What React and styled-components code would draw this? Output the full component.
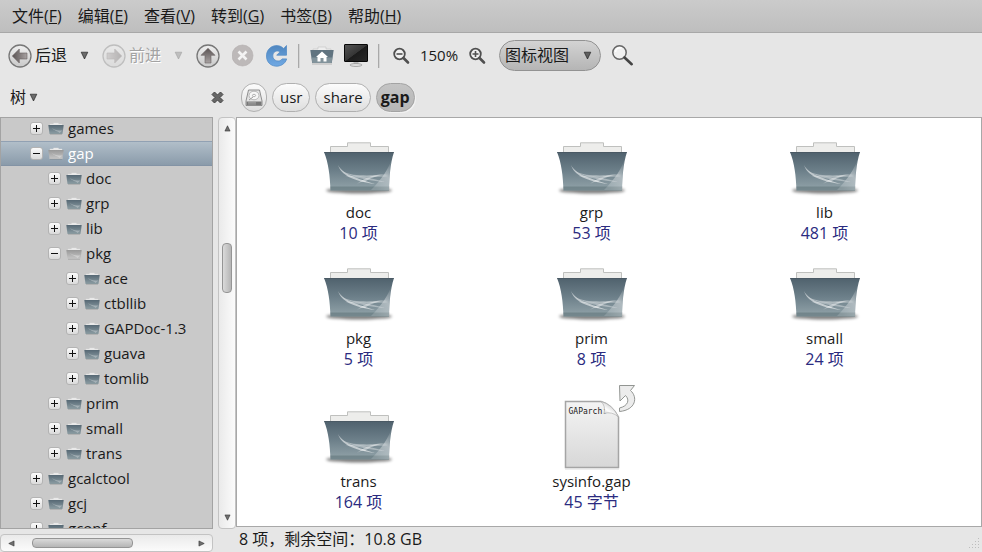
import React from "react";
import styled, { createGlobalStyle, css } from "styled-components";

const fonts = `"Open Sans", "Noto Sans CJK SC", sans-serif`;

const GlobalStyle = createGlobalStyle`
	* {
		box-sizing: border-box;
	}

	body {
		margin: 0;
		background: #e6e6e6;
		color: #1a1a1a;
		font-family: ${fonts};
		font-size: 15px;
		line-height: 21px;
	}

	button, select {
		margin: 0;
		padding: 0;
		border: 0;
		background: none;
		color: inherit;
		font: inherit;
	}

	ul {
		margin: 0;
		padding: 0;
		list-style: none;
	}

	svg {
		display: block;
		flex: none;
	}
`;

const Window = styled.div`
	display: flex;
	flex-direction: column;
	height: 100vh;
	overflow: hidden;
`;

const MenuBar = styled.nav`
	display: flex;
	flex: none;
	align-items: center;
	gap: 16px;
	height: 33px;
	padding: 0 12px;
	border-bottom: 1px solid #a8a8a8;
	background: linear-gradient(#cbcbcb, #bebebe);
	font-size: 16px;
`;

const ToolBar = styled.div`
	display: flex;
	flex: none;
	align-items: center;
	gap: 10px;
	height: 45px;
	padding: 0 8px;
`;

const ToolGroup = styled.div`
	display: flex;
	align-items: center;
	gap: ${({ $gap }) => $gap || 10}px;
`;

const ToolButton = styled.button`
	display: flex;
	align-items: center;
	justify-content: center;
	gap: 3px;
	font-size: 16px;

	&:disabled {
		color: #a3a3a3;
		text-shadow: 1px 1px 0 #fff;
	}
`;

const HistoryButton = styled(ToolButton)`
	width: 11px;
	height: 24px;
`;

const Separator = styled.div`
	width: 2px;
	height: 24px;
	border-left: 1px solid #a9a9a9;
	border-right: 1px solid #d4d4d4;
`;

const ZoomGroup = styled(ToolGroup)`
	padding: 0 3px 0 2px;
`;

const ZoomLevel = styled.output`
	width: 58px;
	text-align: center;
`;

const ViewPicker = styled.label`
	position: relative;

	select {
		display: block;
		width: 102px;
		height: 31px;
		padding: 0 5px;
		appearance: none;
		border: 1px solid #929292;
		border-radius: 16px;
		background: linear-gradient(#d3d3d3, #b5b5b5);
		font-size: 16px;
	}

	svg {
		position: absolute;
		top: 11px;
		right: 9px;
		pointer-events: none;
	}
`;

const Body = styled.main`
	display: grid;
	flex: 1;
	grid-template-columns: 236px minmax(0, 1fr);
	min-height: 0;
`;

const SidePane = styled.aside`
	display: grid;
	grid-template-rows: 39px minmax(0, 1fr) 18px;
	grid-template-columns: 213px 18px;
	column-gap: 5px;
	row-gap: 0;
	min-height: 0;
`;

const SideHeader = styled.div`
	display: flex;
	grid-column: 1 / -1;
	align-items: center;
	justify-content: space-between;
	padding: 0 12px 0 10px;
`;

const SideTitle = styled.button`
	display: flex;
	align-items: center;
	gap: 3px;
	font-size: 16px;
`;

const Tree = styled.ul`
	overflow: hidden;
	margin-bottom: 5px;
	border: 1px solid #a3a3a3;
	background: #c9c9c9;
`;

/* the list is scrolled, so the first row is partly hidden */
const TreeRow = styled.li`
	display: flex;
	align-items: center;
	gap: 4px;
	height: 25px;
	padding-left: ${({ $depth }) => 29 + $depth * 18}px;

	&:first-child {
		margin-top: -2px;
	}

	${({ $selected }) =>
		$selected &&
		css`
			border-top: 1px solid #91a1b3;
			border-bottom: 1px solid #8393a5;
			background: linear-gradient(#b1bec9, #8a9baa);
			color: #fff;
		`}
`;

const Expander = styled.button`
	display: grid;
	place-items: center;
	width: 13px;
	height: 13px;
	margin-right: 1px;
	border: 1px solid #b3b3b3;
	border-radius: 3px;
	background: linear-gradient(#fbfbfb, #dadada);
`;

const ScrollBar = styled.div`
	display: flex;
	flex-direction: ${({ $vertical }) => ($vertical ? "column" : "row")};
	align-items: center;
	justify-content: space-between;
	padding: ${({ $vertical }) => ($vertical ? "7px 0" : "0 7px")};
	border: 1px solid #c3c3c3;
	border-radius: 4px;
	background: ${({ $vertical }) =>
		$vertical
			? "linear-gradient(90deg, #eaeaea, #fbfbfb)"
			: "linear-gradient(#eaeaea, #fbfbfb)"};
	${({ $vertical }) => $vertical && "margin-bottom: 5px;"}
`;

const Track = styled.div`
	display: flex;
	flex: 1;
	flex-direction: ${({ $vertical }) => ($vertical ? "column" : "row")};
	align-items: center;

	&::before {
		content: "";
		flex: ${({ $start }) => $start} 0 0;
	}

	&::after {
		content: "";
		flex: ${({ $end }) => $end} 0 0;
	}
`;

const Thumb = styled.div`
	width: ${({ $vertical }) => ($vertical ? 10 : 101)}px;
	height: ${({ $vertical }) => ($vertical ? 50 : 10)}px;
	border: 1px solid #959595;
	border-radius: 4px;
	background: ${({ $vertical }) =>
		$vertical
			? "linear-gradient(90deg, #dadada, #b5b5b5)"
			: "linear-gradient(#dadada, #b5b5b5)"};
`;

const MainPane = styled.section`
	display: flex;
	flex-direction: column;
	min-height: 0;
`;

const PathBar = styled.nav`
	display: flex;
	flex: none;
	align-items: center;
	gap: 5px;
	height: 39px;
	padding: 0 5px;
`;

const PathButton = styled.button`
	display: flex;
	align-items: center;
	justify-content: center;
	height: 29px;
	padding: 0 ${({ $icon }) => ($icon ? 3 : 7)}px;
	border: 1px solid #b0b0b0;
	border-radius: 15px;
	background: linear-gradient(#fcfcfc, #dedede);

	${({ $current }) =>
		$current &&
		css`
			padding: 0 4px;
			border-color: #a3a3a3;
			background: linear-gradient(#c4c4c4, #b6b6b6);
			box-shadow: 1px 1px 0 #f2f2f2;
			font-size: 16px;
			font-weight: bold;
		`}
`;

const IconView = styled.ul`
	display: grid;
	flex: 1;
	grid-template-columns: repeat(auto-fill, 233px);
	align-content: start;
	align-items: end;
	row-gap: 24px;
	min-height: 0;
	overflow: hidden;
	padding: 24px 5px 0;
	border: 1px solid #a8a8a8;
	background: #fff;
`;

const Entry = styled.li`
	display: flex;
	flex-direction: column;
	align-items: center;
	gap: 1px;
`;

const EntryName = styled.div`
	text-align: center;

	small {
		display: block;
		color: #2b2b80;
		font-size: 16px;
	}
`;

const FilePreview = styled.div`
	position: relative;
	padding-top: 6px;
`;

const PreviewText = styled.span`
	position: absolute;
	top: 12px;
	left: 5px;
	font: 8px/12px "DejaVu Sans Mono", monospace;
`;

const PaperFold = styled.svg`
	position: absolute;
	top: 6px;
	right: 0;
`;

const Emblem = styled.svg`
	position: absolute;
	top: -10px;
	right: -18px;
`;

const StatusBar = styled.footer`
	display: flex;
	flex: none;
	align-items: center;
	justify-content: space-between;
	height: 25px;
	padding-left: 3px;
	font-size: 16px;
`;

const Triangle = ({ dir = "down", size = 9 }) => {
	const turn = { down: 0, left: 90, up: 180, right: 270 }[dir];
	return (
		<svg width={size} height={size} viewBox="0 0 9 9">
			<path
				d="M1.200 1.200h6.600L4.500 8z"
				transform={`rotate(${turn} 4.5 4.5)`}
				fill="currentColor"
				fillOpacity=".6"
				stroke="currentColor"
				strokeOpacity=".8"
				strokeWidth=".8"
			/>
		</svg>
	);
};

const CircleArrow = ({ turn = 0, faded }) => (
	<svg width="24" height="24" viewBox="0 0 24 24" opacity={faded ? 0.35 : 1}>
		<defs>
			<linearGradient id="circle" x2="0" y2="1">
				<stop stopColor="#f0f0f0" />
				<stop offset="1" stopColor="#c9c9c9" />
			</linearGradient>
			<linearGradient id="arrow" x2="1" y2="0">
				<stop stopColor="#5a5353" />
				<stop offset="1" stopColor="#a8a2a2" />
			</linearGradient>
		</defs>
		<circle cx="12" cy="12" r="11" fill="url(#circle)" stroke="#777" strokeWidth="1.300" />
		<path
			d="M4.300 12l7-7v4H19v6h-7.700v4z"
			transform={`rotate(${turn} 12 12)`}
			fill="url(#arrow)"
			stroke="#696262"
			strokeWidth=".6"
		/>
	</svg>
);

const StopIcon = () => (
	<svg width="22" height="24" viewBox="0 0 22 24">
		<circle cx="10.500" cy="11.500" r="10.500" fill="#bdb9b9" stroke="#b1adad" strokeWidth=".6" />
		<path d="M6.500 7.500l8 8m0-8l-8 8" stroke="#f3f3f3" strokeWidth="2.600" />
	</svg>
);

const ReloadIcon = () => (
	<svg width="22" height="24" viewBox="0 0 22 24">
		<defs>
			<linearGradient id="reload" x2="0" y2="1">
				<stop stopColor="#4f86bf" />
				<stop offset="1" stopColor="#70a9e4" />
			</linearGradient>
		</defs>
		<path
			d="M20.500 1.500v9.700h-9.800l3.500-3.500C9.700 5.500 6.800 8.500 6.800 12c0 5 7 6.800 9.300 2.900h4.600C17.500 25.500.5 24.500.5 12 .5 2 12-1.500 17.700 4.600z"
			fill="url(#reload)"
			stroke="#568dc6"
			strokeWidth=".8"
		/>
	</svg>
);

const HomeIcon = () => (
	<svg width="24" height="24" viewBox="0 0 24 24">
		<path d="M3 7V5h5V3h8v2h5v2z" fill="#eee" stroke="#c5c5c5" strokeWidth=".6" />
		<path d="M.3 6h23.400L21.800 19H2.200z" fill="#617480" />
		<path d="M1.700 13.500h20.600L21.700 19H2.300z" fill="#82939b" />
		<path d="M12 7.500l6 5.500h-1.500v4.500h-3V14h-3v3.500h-3V13H6z" fill="#fff" />
		<path d="M2 20h20" stroke="#b5b5b5" />
	</svg>
);

const ComputerIcon = () => (
	<svg width="24" height="24" viewBox="0 0 24 24">
		<defs>
			<linearGradient id="screen" x2="1" y2="1">
				<stop stopColor="#555" />
				<stop offset=".5" stopColor="#363636" />
				<stop offset=".52" stopColor="#1c1c1c" />
				<stop offset="1" stopColor="#292929" />
			</linearGradient>
		</defs>
		<rect x=".5" y=".5" width="23" height="17" rx=".5" fill="url(#screen)" stroke="#080808" />
		<path d="M9.500 18h5v3h-5z" fill="#bbb" />
		<ellipse cx="12" cy="21" rx="6" ry="1.500" fill="#ddd" stroke="#929292" strokeWidth=".7" />
	</svg>
);

const ZoomIcon = ({ plus }) => (
	<svg width="18" height="18" viewBox="0 0 18 18" fill="none" stroke="#505050">
		<circle cx="7.500" cy="7" r="5.300" fill="#f1f1f1" strokeWidth="1.800" />
		<path d="M11.500 11l4.500 4.500" strokeWidth="2.600" strokeLinecap="round" />
		<path d={plus ? "M4.500 7h6M7.500 4v6" : "M4.500 7h6"} strokeWidth="1.600" />
	</svg>
);

const SearchIcon = () => (
	<svg width="24" height="24" viewBox="0 0 24 24">
		<circle cx="8.500" cy="8.500" r="6.700" fill="#f0f0f0" stroke="#666" strokeWidth="1.500" />
		<path d="M4.500 8a4.500 4.500 0 0 1 6-4" fill="none" stroke="#fff" strokeWidth="1.500" />
		<path d="M13.500 13.500l7.200 6.700" stroke="#444" strokeWidth="2.600" strokeLinecap="round" />
	</svg>
);

const CloseIcon = () => (
	<svg width="13" height="13" viewBox="0 0 13 13">
		<path
			d="M1 3.500L3.500 1l3 3 3-3L12 3.500l-3 3 3 3L9.500 12l-3-3-3 3L1 9.500l3-3z"
			fill="#666"
			stroke="#444"
		/>
	</svg>
);

const DiskIcon = () => (
	<svg width="18" height="18" viewBox="0 0 18 18">
		<path d="M3.500 1h11l2.500 11v4.500H1V12z" fill="#e3e3e3" stroke="#777" strokeWidth=".8" />
		<path d="M1.500 12.500h15V16h-15z" fill="#777" />
		<path d="M3 13.700h8M3 15h8" stroke="#bbb" strokeWidth=".6" />
		<ellipse cx="9" cy="6.500" rx="5" ry="4.300" fill="#f6f6f6" stroke="#aaa" strokeWidth=".8" />
		<ellipse cx="9" cy="6.500" rx="1.600" ry="1.200" fill="none" stroke="#999" strokeWidth=".7" />
		<path d="M4 11l4-3" stroke="#999" />
	</svg>
);

const SmallFolder = ({ open }) => (
	<svg width="16" height="16" viewBox="0 0 16 16">
		<defs>
			<linearGradient id={open ? "small-open" : "small-closed"} x2="0" y2="1">
				<stop stopColor={open ? "#989898" : "#566874"} />
				<stop offset="1" stopColor={open ? "#c7c7c7" : "#8d9ea4"} />
			</linearGradient>
		</defs>
		<path d="M2 4V3h3.500V2h5v1H14v1z" fill="#ececec" stroke="#ddd" strokeWidth=".4" />
		<path d="M.3 4h15.400l-1.200 9H1.500z" fill={`url(#${open ? "small-open" : "small-closed"})`} />
		<path d="M4 7c3 2.500 7 2.500 10.500 2.500l-3 2.500C10 10 6 10 4 7z" fill="#fff" opacity=".3" />
		<path d="M2 13.300h12" stroke="#777" strokeWidth=".7" opacity=".5" />
	</svg>
);

const FolderIcon = () => (
	<svg width="76" height="59" viewBox="0 0 76 59">
		<defs>
			<linearGradient id="folder" x2="0" y2="1">
				<stop stopColor="#4f616d" />
				<stop offset=".5" stopColor="#6d808a" />
				<stop offset="1" stopColor="#93a4aa" />
			</linearGradient>
			<linearGradient id="shine" x1=".3" y1="1" x2=".8" y2="0">
				<stop stopColor="#fff" stopOpacity=".15" />
				<stop offset=".5" stopColor="#fff" stopOpacity=".4" />
				<stop offset="1" stopColor="#fff" stopOpacity="0" />
			</linearGradient>
			<filter id="soft" x="-20%" y="-100%" width="140%" height="300%">
				<feGaussianBlur stdDeviation="1.700" />
			</filter>
		</defs>
		<ellipse cx="38" cy="48.500" rx="33" ry="3" fill="#000" opacity=".5" filter="url(#soft)" />
		<path
			d="M9.500 12V4.500H26.500V.8H49.500V4.500H67.500V12z"
			fill="#ededeb"
			stroke="#bfc0be"
			strokeLinejoin="round"
		/>
		<path d="M3 10h70C69 22 68.500 35 68 48.500H9.500C9 34 7.500 21 3 10z" fill="url(#folder)" />
		<path d="M3.500 10.500h69" stroke="#4a5964" />
		<path d="M9.300 44.500h59l-.3 4H9.500z" fill="#53666c" opacity=".45" />
		<path d="M71.500 15C68 27 60 38 50 48h18c.4-12 .5-22 3.500-33z" fill="url(#shine)" />
		<path d="M17 23c4 8 14 12 37 19-22-3-34-9-37-19z" fill="#fff" opacity=".55" />
		<path d="M21 29c12 7 30 3 47 5-16 1-34 4-47-5z" fill="#fff" opacity=".4" />
		<path d="M24 34c12-1 22 1 40 6-16-1-28-5-40-6z" fill="#fff" opacity=".35" />
		<path d="M36 42c8-7 18-10 32-10-11 1-20 4-24 8-4-1-6 1-8 2z" fill="#fff" opacity=".4" />
	</svg>
);

const PaperIcon = () => (
	<svg width="56" height="70" viewBox="0 0 56 70">
		<defs>
			<linearGradient id="paper" x2="0" y2="1">
				<stop stopColor="#f4f4f4" />
				<stop offset="1" stopColor="#d7d7d7" />
			</linearGradient>
		</defs>
		<path
			d="M1.500 1.500H37Q47 4 54.500 17V67.500H1.500z"
			fill="url(#paper)"
			stroke="#a5a5a5"
			strokeWidth="1.500"
		/>
		<path d="M1 69h54" stroke="#ddd" />
	</svg>
);

const tree = [
	{ name: "games", depth: 0 },
	{ name: "gap", depth: 0, open: true, selected: true },
	{ name: "doc", depth: 1 },
	{ name: "grp", depth: 1 },
	{ name: "lib", depth: 1 },
	{ name: "pkg", depth: 1, open: true },
	{ name: "ace", depth: 2 },
	{ name: "ctbllib", depth: 2 },
	{ name: "GAPDoc-1.3", depth: 2 },
	{ name: "guava", depth: 2 },
	{ name: "tomlib", depth: 2 },
	{ name: "prim", depth: 1 },
	{ name: "small", depth: 1 },
	{ name: "trans", depth: 1 },
	{ name: "gcalctool", depth: 0 },
	{ name: "gcj", depth: 0 },
	{ name: "gconf", depth: 0 }
];

const folders = [
	["doc", "10 项"],
	["grp", "53 项"],
	["lib", "481 项"],
	["pkg", "5 项"],
	["prim", "8 项"],
	["small", "24 项"],
	["trans", "164 项"]
];

const menus = [
	["文件", "F"],
	["编辑", "E"],
	["查看", "V"],
	["转到", "G"],
	["书签", "B"],
	["帮助", "H"]
];

const Tools = () => (
	<ToolBar>
		<ToolGroup $gap={12}>
			<ToolButton>
				<CircleArrow />
				后退
			</ToolButton>
			<HistoryButton aria-label="后退历史">
				<Triangle />
			</HistoryButton>
			<ToolButton disabled>
				<CircleArrow turn={180} faded />
				前进
			</ToolButton>
			<HistoryButton disabled aria-label="前进历史">
				<Triangle />
			</HistoryButton>
			<ToolButton aria-label="向上">
				<CircleArrow turn={90} />
			</ToolButton>
			<ToolButton disabled aria-label="停止">
				<StopIcon />
			</ToolButton>
			<ToolButton aria-label="重新载入">
				<ReloadIcon />
			</ToolButton>
		</ToolGroup>
		<Separator />
		<ToolGroup>
			<ToolButton aria-label="主目录">
				<HomeIcon />
			</ToolButton>
			<ToolButton aria-label="计算机">
				<ComputerIcon />
			</ToolButton>
		</ToolGroup>
		<Separator />
		<ZoomGroup $gap="0">
			<ToolButton aria-label="缩小">
				<ZoomIcon />
			</ToolButton>
			<ZoomLevel>150%</ZoomLevel>
			<ToolButton aria-label="放大">
				<ZoomIcon plus />
			</ToolButton>
		</ZoomGroup>
		<ViewPicker>
			<select aria-label="视图">
				<option>图标视图</option>
			</select>
			<Triangle />
		</ViewPicker>
		<ToolButton aria-label="搜索">
			<SearchIcon />
		</ToolButton>
	</ToolBar>
);

const Sidebar = () => (
	<SidePane>
		<SideHeader>
			<SideTitle>
				树 <Triangle />
			</SideTitle>
			<ToolButton aria-label="关闭侧边栏">
				<CloseIcon />
			</ToolButton>
		</SideHeader>
		<Tree>
			{tree.map(({ name, depth, open, selected }) => (
				<TreeRow key={name} $depth={depth} $selected={selected}>
					<Expander aria-label={name}>
						<svg width="9" height="9" viewBox="0 0 9 9" stroke="#111">
							<path d={open ? "M1 4.500h7" : "M1 4.500h7M4.500 1v7"} />
						</svg>
					</Expander>
					<SmallFolder open={open} />
					{name}
				</TreeRow>
			))}
		</Tree>
		<ScrollBar $vertical>
			<Triangle dir="up" size={7} />
			<Track $vertical $start={109} $end={216}>
				<Thumb $vertical />
			</Track>
			<Triangle size={7} />
		</ScrollBar>
		<ScrollBar>
			<Triangle dir="left" size={7} />
			<Track $start={17} $end={65}>
				<Thumb />
			</Track>
			<Triangle dir="right" size={7} />
		</ScrollBar>
	</SidePane>
);

const App = () => (
	<Window>
		<GlobalStyle />
		<MenuBar>
			{menus.map(([label, key]) => (
				<button key={key}>
					{label}(<u>{key}</u>)
				</button>
			))}
		</MenuBar>
		<Tools />
		<Body>
			<Sidebar />
			<MainPane>
				<PathBar>
					<PathButton $icon aria-label="文件系统">
						<DiskIcon />
					</PathButton>
					<PathButton>usr</PathButton>
					<PathButton>share</PathButton>
					<PathButton $current>gap</PathButton>
				</PathBar>
				<IconView>
					{folders.map(([name, count]) => (
						<Entry key={name}>
							<FolderIcon />
							<EntryName>
								{name}
								<small>{count}</small>
							</EntryName>
						</Entry>
					))}
					<Entry>
						<FilePreview>
							<PaperIcon />
							<PreviewText>GAParch:</PreviewText>
							<PaperFold width="20" height="19" viewBox="0 0 20 19">
								<defs>
									<linearGradient id="fold" x1=".1" y1="1" x2=".8" y2=".1">
										<stop stopColor="#b5b5b5" />
										<stop offset=".45" stopColor="#fdfdfd" />
										<stop offset="1" stopColor="#bcbcbc" />
									</linearGradient>
								</defs>
								<path
									d="M1 1.500Q6 6 4 13.500 12 11 18.500 17 12 4 1 1.500z"
									fill="url(#fold)"
									stroke="#b0b0b0"
									strokeWidth=".7"
								/>
							</PaperFold>
							<Emblem width="20" height="30" viewBox="0 0 20 30">
								<path
									d="M1.500 1.500h15l-4 5C20 13 18 26 1.500 27.500v-3.500C10 22 12 16 7.500 11.500L2 17z"
									fill="#ececec"
									stroke="#929592"
								/>
							</Emblem>
						</FilePreview>
						<EntryName>
							sysinfo.gap
							<small>45 字节</small>
						</EntryName>
					</Entry>
				</IconView>
				<StatusBar>
					8 项，剩余空间：10.8 GB
					<svg width="14" height="25" viewBox="0 0 14 25" fill="#bdbdbd">
						{[0, 1, 2, 3].map(row =>
							Array.from({ length: row + 1 }, (_, i) => (
								<rect key={`${row}-${i}`} x={10 - i * 3} y={11 + row * 3} width="1" height="1" />
							))
						)}
					</svg>
				</StatusBar>
			</MainPane>
		</Body>
	</Window>
);

export default App;
